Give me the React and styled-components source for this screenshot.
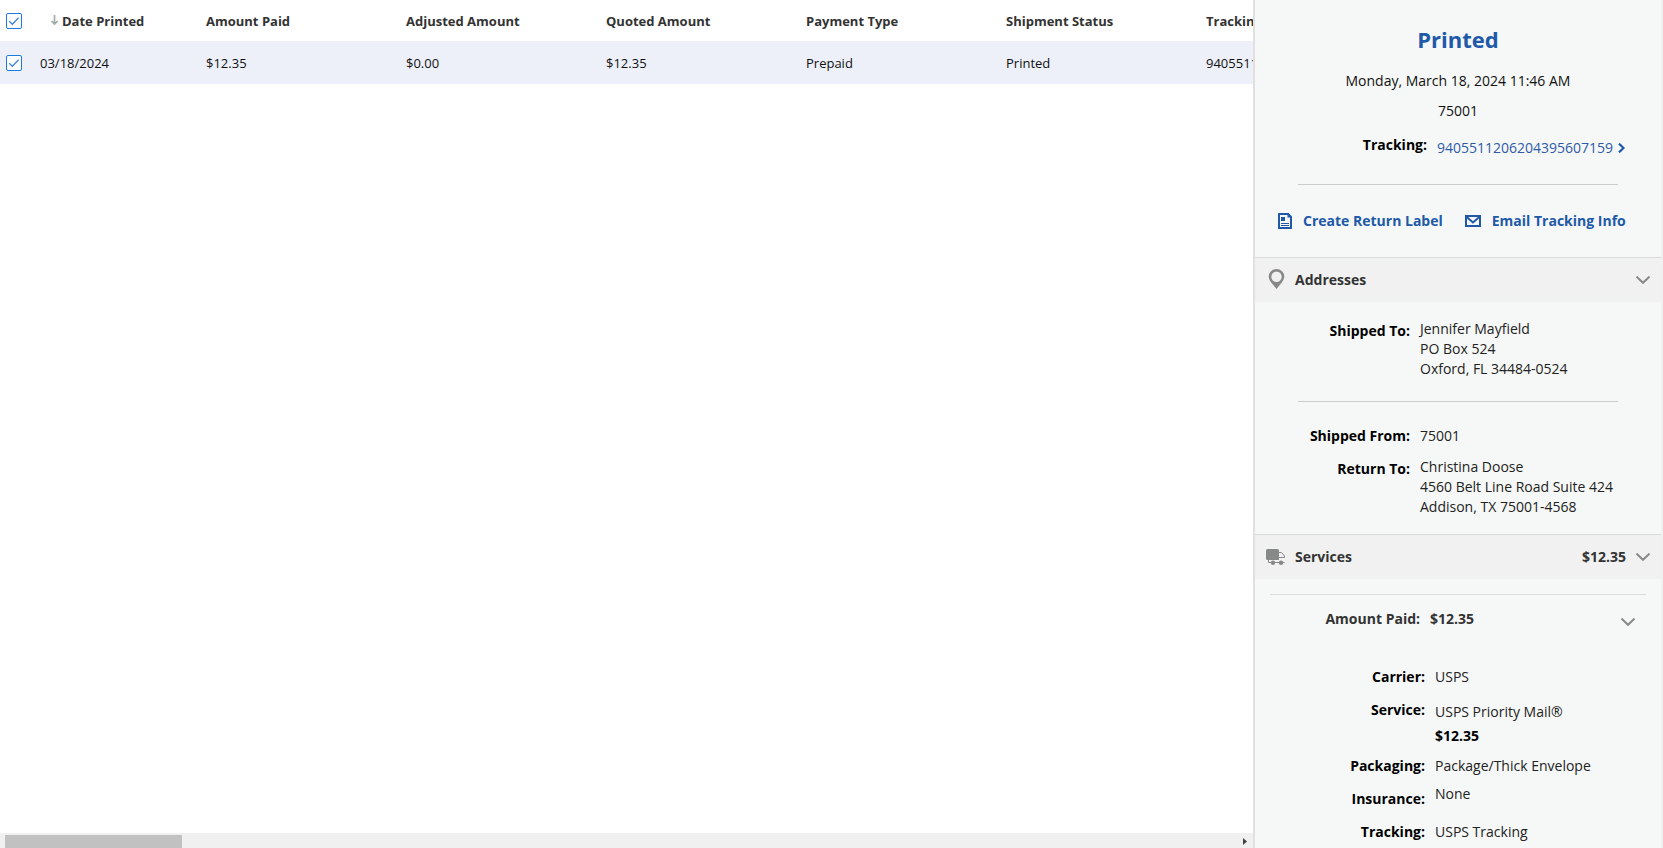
import React from 'react';
import styled, { createGlobalStyle } from 'styled-components';

const GlobalStyle = createGlobalStyle`
  * { box-sizing: border-box; }
  body {
    margin: 0;
    background: #fff;
    color: #222;
    font-family: "Open Sans", "Noto Sans", sans-serif;
    font-size: 14px;
    line-height: 20px;
  }
  button { font: inherit; color: inherit; background: none; border: 0; padding: 0; cursor: pointer; }
  a { color: inherit; text-decoration: none; }
  svg { display: block; flex: none; }
`;

const Page = styled.div`
  display: flex;
  height: 100vh;
  overflow: hidden;
`;

const GridPane = styled.main`
  flex: 1;
  min-width: 0;
  display: flex;
  flex-direction: column;
`;

const TableViewport = styled.div`
  flex: 1;
  min-height: 0;
  overflow: hidden;
`;

const Table = styled.table`
  width: 1406px;
  table-layout: fixed;
  border-collapse: collapse;
  font-size: 13px;
`;

const CheckColumn = styled.col`width: 40px;`;
const DateColumn = styled.col`width: 166px;`;
const DataColumn = styled.col`width: 200px;`;

const HeadCell = styled.th`
  height: 41px;
  padding: 0;
  text-align: left;
  font-weight: 700;
  color: #333;
  white-space: nowrap;
`;

const SortButton = styled.button`
  display: flex;
  align-items: center;
  gap: 4px;
  padding-left: 11px;
`;

const SelectedRow = styled.tr`
  background: #edf0f9;
`;

const Cell = styled.td`
  height: 43px;
  padding: 0;
  color: #111;
  white-space: nowrap;
`;

const CheckHolder = styled.span`
  position: relative;
  display: block;
  width: 16px;
  height: 16px;
  margin-left: 6px;

  input {
    appearance: none;
    display: block;
    width: 16px;
    height: 16px;
    margin: 0;
    border: 1px solid #1a7be0;
    border-radius: 2px;
    background: #fff;
  }
  svg {
    position: absolute;
    inset: 0;
    display: none;
    pointer-events: none;
  }
  input:checked + svg { display: block; }
`;

const ScrollBar = styled.div`
  display: flex;
  align-items: center;
  justify-content: space-between;
  height: 15px;
  padding: 2px 6px 0 5px;
  background: #f0f0f0;
`;

const ScrollThumb = styled.div`
  width: 177px;
  height: 13px;
  background: #c1c1c1;
`;

const Panel = styled.aside`
  flex: none;
  width: 410px;
  overflow: hidden;
  background: #f6f8f7;
  border-left: 2px solid #e0e0e0;
  border-right: 2px solid #f0f0f0;
`;

const Summary = styled.section`
  display: flex;
  flex-direction: column;
  padding: 24px 0 26px;
  text-align: center;
  color: #111;
`;

const Status = styled.h1`
  margin: 0 0 17px;
  font-size: 22px;
  line-height: 30px;
  font-weight: 700;
  color: #2159a9;
`;

const SummaryLine = styled.p`
  margin: 0 0 10px;
`;

const Fields = styled.dl`
  display: flex;
  flex-direction: column;
  gap: ${p => p.$gap || 0}px;
  margin: 0;
`;

const Field = styled.div`
  display: grid;
  grid-template-columns: ${p => p.$label}px 1fr;
  column-gap: 10px;
  text-align: left;
`;

const Term = styled.dt`
  font-weight: 700;
  text-align: right;
  color: #000;
  line-height: ${p => p.$line || 20}px;
`;

const Detail = styled.dd`
  margin: 0;
  line-height: ${p => p.$line || 20}px;
  color: #222;
`;

const TrackingFields = styled(Fields)`
  margin-top: 4px;
`;

const ServiceFields = styled(Fields)`
  ${Term} { padding: 5px 0; }
`;

const PaddedDetail = styled(Detail)`
  padding-top: 5px;

  strong { color: #000; }
`;

const TrackingLink = styled.a`
  display: flex;
  align-items: center;
  gap: 5px;
  color: #2f5aa8;
`;

const Divider = styled.hr`
  width: 320px;
  height: 1px;
  margin: ${p => p.$above}px auto ${p => p.$below}px;
  border: 0;
  background: #c9cccb;
`;

const Actions = styled.div`
  display: flex;
  gap: 22px;
  padding-left: 23px;
`;

const Action = styled.button`
  display: flex;
  align-items: center;
  gap: 11px;
  font-weight: 700;
  color: #2159a9;
  white-space: nowrap;
`;

const SectionHeader = styled.button`
  display: grid;
  grid-template-columns: 19px 1fr auto 14px;
  align-items: center;
  column-gap: 10px;
  width: 100%;
  height: 45px;
  padding: 0 11px;
  border-top: 1px solid #dadcdb;
  background: #f1f1f1;
  font-weight: 700;
  color: #333;
  text-align: left;
`;

const AddressBody = styled.div`
  padding: 17px 0;
`;

const ServiceBody = styled.div`
  margin: 15px 15px 0;
  border-top: 1px solid #dadedd;
`;

const AmountToggle = styled.button`
  display: grid;
  grid-template-columns: 150px 1fr 14px;
  column-gap: 10px;
  align-items: start;
  width: 100%;
  margin: 14px 0 33px;
  padding-right: 11px;
  font-weight: 700;
  color: #333;
  text-align: left;

  span:first-child { text-align: right; }
  svg { margin-top: 9px; }
`;

const Check = () => (
  <svg width="16" height="16" viewBox="0 0 16 16" fill="none" stroke="#3f86dc" strokeWidth="1.3">
    <path d="M3.2 8.2 6.4 11.3 12.6 4.7" />
  </svg>
);

const SortArrow = () => (
  <svg width="7" height="12" viewBox="0 0 7 12" fill="none" stroke="#a3aaaa" strokeWidth="1.7">
    <path d="M3.5 0V9M.5 6 3.5 9 6.5 6" />
  </svg>
);

const Chevron = () => (
  <svg width="14" height="8" viewBox="0 0 14 8" fill="none" stroke="#868988" strokeWidth="2">
    <path d="M.5 .6 7 6.8 13.5 .6" />
  </svg>
);

const LinkChevron = () => (
  <svg width="7" height="10" viewBox="0 0 7 10" fill="none" stroke="#2159a9" strokeWidth="2.2">
    <path d="M1 .6 5.5 5 1 9.4" />
  </svg>
);

const LabelIcon = () => (
  <svg width="14" height="16" viewBox="0 0 14 16" fill="none" stroke="#2159a9">
    <path d="M1 1H10.2L13 3.800V15H1Z" strokeWidth="2" />
    <path d="M3 10.500H11M3 12.500H11" />
    <path d="M3 4H7V8H3ZM9.500 1V4.500H13V3L10.500 1Z" fill="#2159a9" stroke="none" />
  </svg>
);

const MailIcon = () => (
  <svg width="16" height="12" viewBox="0 0 16 12" fill="none" stroke="#2159a9" strokeWidth="2">
    <path d="M1 1H15V11H1Z" />
    <path d="M2 2.200 8 7.500 14 2.200" />
  </svg>
);

const PinIcon = () => (
  <svg width="19" height="22" viewBox="0 0 19 22" fill="#868988">
    <path fillRule="evenodd" d="M10.500 0A7.800 7.600 0 0 0 2.700 7.600C2.700 10.500 4.500 12.500 6 14.500L10.500 20 15 14.500C16.500 12.500 18.300 10.500 18.300 7.600A7.800 7.600 0 0 0 10.500 0ZM10.500 2.500A5.200 5.200 0 1 1 10.500 12.900A5.200 5.200 0 0 1 10.500 2.500Z" />
  </svg>
);

const TruckIcon = () => (
  <svg width="19" height="18" viewBox="0 0 19 18" fill="#868988">
    <path d="M1.500 1H11.500Q13 1 13 2.500V12H1.500Q0 12 0 10.500V2.500Q0 1 1.500 1Z" />
    <path d="M13 4.500H15.500L18.500 8V9.500M2.500 11V14.500H18.500M13 9.500H18.500" fill="none" stroke="#868988" />
    <circle cx="7" cy="14.700" r="2.200" />
    <circle cx="15" cy="14.700" r="2.200" />
  </svg>
);

const CheckBox = ({ label }) => (
  <CheckHolder>
    <input type="checkbox" defaultChecked aria-label={label} />
    <Check />
  </CheckHolder>
);

const columns = [
  ['Amount Paid', '$12.35'],
  ['Adjusted Amount', '$0.00'],
  ['Quoted Amount', '$12.35'],
  ['Payment Type', 'Prepaid'],
  ['Shipment Status', 'Printed'],
  ['Tracking #', '9405511206204395607159'],
];

export default function App() {
  return (
    <Page>
      <GlobalStyle />
      <GridPane>
        <TableViewport>
          <Table>
            <colgroup>
              <CheckColumn />
              <DateColumn />
              {columns.map(([name]) => <DataColumn key={name} />)}
            </colgroup>
            <thead>
              <tr>
                <HeadCell><CheckBox label="Select all" /></HeadCell>
                <HeadCell><SortButton><SortArrow />Date Printed</SortButton></HeadCell>
                {columns.map(([name]) => <HeadCell key={name}>{name}</HeadCell>)}
              </tr>
            </thead>
            <tbody>
              <SelectedRow>
                <Cell><CheckBox label="Select shipment" /></Cell>
                <Cell>03/18/2024</Cell>
                {columns.map(([name, value]) => <Cell key={name}>{value}</Cell>)}
              </SelectedRow>
            </tbody>
          </Table>
        </TableViewport>
        <ScrollBar>
          <ScrollThumb />
          <svg width="4" height="7" viewBox="0 0 4 7" fill="#444"><path d="M0 0 4 3.500 0 7Z" /></svg>
        </ScrollBar>
      </GridPane>

      <Panel>
        <Summary>
          <Status>Printed</Status>
          <SummaryLine>Monday, March 18, 2024 11:46 AM</SummaryLine>
          <SummaryLine>75001</SummaryLine>
          <TrackingFields>
            <Field $label={172}>
              <Term>Tracking:</Term>
              <Detail $line={26}>
                <TrackingLink href="#tracking">9405511206204395607159<LinkChevron /></TrackingLink>
              </Detail>
            </Field>
          </TrackingFields>
          <Divider $above={23} $below={26} />
          <Actions>
            <Action><LabelIcon />Create Return Label</Action>
            <Action><MailIcon />Email Tracking Info</Action>
          </Actions>
        </Summary>

        <SectionHeader aria-expanded="true">
          <PinIcon /><span>Addresses</span><span /><Chevron />
        </SectionHeader>
        <AddressBody>
          <Fields>
            <Field $label={155}>
              <Term $line={24}>Shipped To:</Term>
              <Detail>Jennifer Mayfield<br />PO Box 524<br />Oxford, FL 34484-0524</Detail>
            </Field>
          </Fields>
          <Divider $above={22} $below={22} />
          <Fields $gap={9}>
            <Field $label={155}>
              <Term $line={24}>Shipped From:</Term>
              <Detail $line={24}>75001</Detail>
            </Field>
            <Field $label={155}>
              <Term $line={24}>Return To:</Term>
              <Detail>Christina Doose<br />4560 Belt Line Road Suite 424<br />Addison, TX 75001-4568</Detail>
            </Field>
          </Fields>
        </AddressBody>

        <SectionHeader aria-expanded="true">
          <TruckIcon /><span>Services</span><span>$12.35</span><Chevron />
        </SectionHeader>
        <ServiceBody>
          <AmountToggle aria-expanded="true">
            <span>Amount Paid:</span><span>$12.35</span><Chevron />
          </AmountToggle>
          <ServiceFields $gap={3}>
            <Field $label={155}>
              <Term>Carrier:</Term>
              <PaddedDetail>USPS</PaddedDetail>
            </Field>
            <Field $label={155}>
              <Term>Service:</Term>
              <PaddedDetail $line={24}>USPS Priority Mail®<br /><strong>$12.35</strong></PaddedDetail>
            </Field>
            <Field $label={155}>
              <Term>Packaging:</Term>
              <PaddedDetail>Package/Thick Envelope</PaddedDetail>
            </Field>
            <Field $label={155}>
              <Term>Insurance:</Term>
              <Detail>None</Detail>
            </Field>
            <Field $label={155}>
              <Term>Tracking:</Term>
              <PaddedDetail>USPS Tracking</PaddedDetail>
            </Field>
          </ServiceFields>
        </ServiceBody>
      </Panel>
    </Page>
  );
}
